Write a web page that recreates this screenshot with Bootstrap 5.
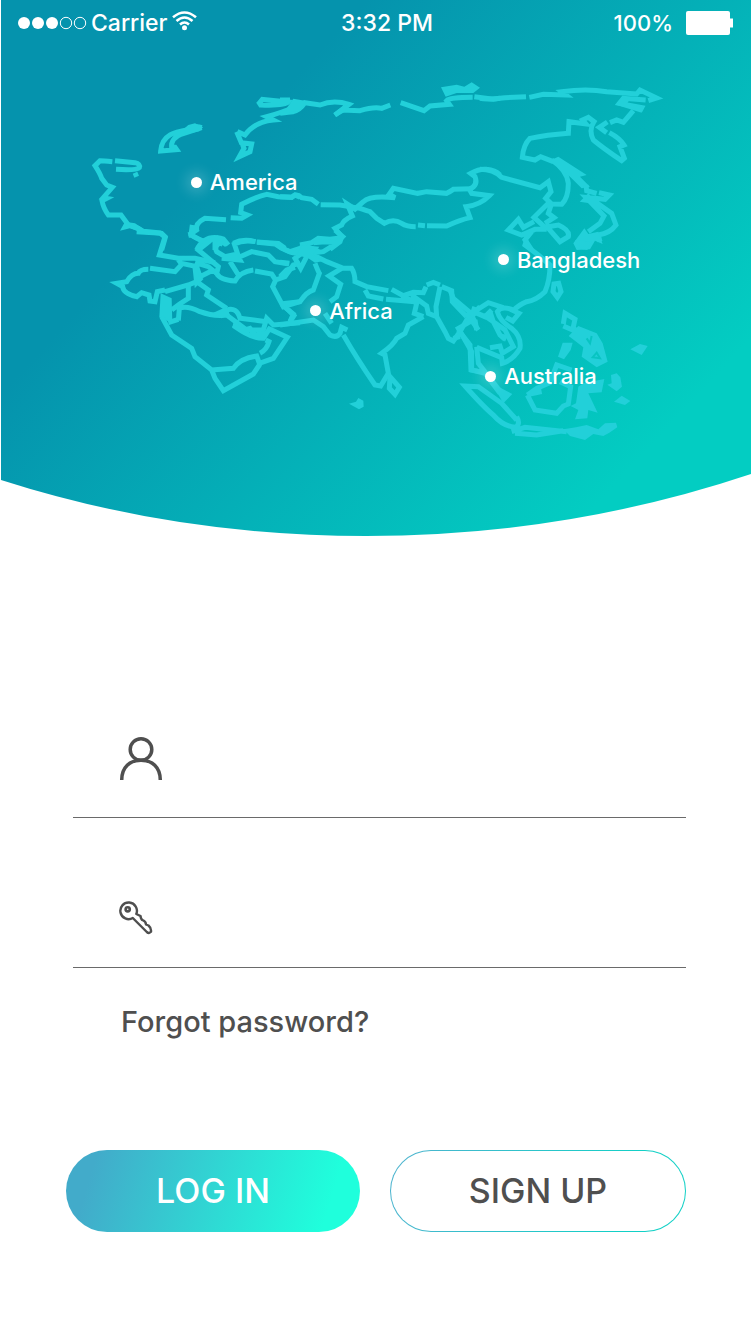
<!DOCTYPE html>
<html lang="en">
<head>
<meta charset="utf-8">
<meta name="viewport" content="width=device-width, initial-scale=1">
<title>Log in</title>
<link href="https://cdn.jsdelivr.net/npm/bootstrap@5.3.0/dist/css/bootstrap.min.css" rel="stylesheet">
<style>
  body { font-family: Inter, "Open Sans", sans-serif; color: #4f4f4f; background: #fff; }
  .hero { padding-left: 1px; }
  .status-bar { padding: 8px 18px 0 17px; font-size: 23px; line-height: 30px; font-weight: 500; }
  .status-side { flex: 1 1 0; }
  .battery-level { font-size: 22px; }
  .pin { font-size: 22px; line-height: 24px; font-weight: 500; gap: 8px; transform: translateY(-50%); }
  .pin-dot { width: 11px; height: 11px; background: #fff; box-shadow: 0 0 14px 5px rgba(255,255,255,.2); }
  .pin-america { left: 25.4%; top: 34%; }
  .pin-bangladesh { left: 66.3%; top: 48.5%; }
  .pin-africa { left: 41.3%; top: 58%; }
  .pin-australia { left: 64.6%; top: 70.2%; }
  .panel { padding: 132px 65px 100px 66px; }
  .field { height: 150px; margin-left: 7px; padding: 0 0 37px 46px; border-bottom: 1px solid #6a6a6a; gap: 24px; }
  .field-password { padding-bottom: 32px; }
  .field label { width: 44px; line-height: 0; }
  .field .form-control { font-size: 28px; line-height: 32px; color: #4f4f4f; }
  .forgot { margin: 34px 0 0 55px; font-size: 29px; line-height: 40px; font-weight: 500; color: #4f4f4f; }
  .actions { gap: 30px; margin-top: 108px; }
  .btn-pill { flex: 1 1 0; height: 82px; border-radius: 41px; font-size: 34px; line-height: 40px; font-weight: 500; }
  .btn-login, .btn-login:hover { color: #fff; border: 0; background: linear-gradient(107deg, #42abca 10%, #1fffdc 88%); }
  .btn-signup, .btn-signup:hover { color: #4f4f4f; border: 1px solid transparent;
    background: linear-gradient(#fff, #fff) padding-box, linear-gradient(107deg, #4fb3cf, #12d0c6 80%) border-box; }
</style>
</head>
<body>
<header class="hero position-relative text-white">
  <svg class="d-block w-100" viewBox="0 0 750 536" aria-hidden="true">
    <defs>
      <linearGradient id="sea" gradientUnits="userSpaceOnUse" x1="196" y1="182" x2="571" y2="531">
        <stop offset="0" stop-color="#0593ad"/><stop offset="1" stop-color="#03cdc2"/>
      </linearGradient>
      <style>.land path { fill: none; stroke: #22d0d9; stroke-width: 15; } .land .isle { fill: #22d0d9; stroke: none; }</style>
    </defs>
    <path fill="url(#sea)" d="M0 0H750V474Q565 536 365 536Q175 536 0 480Z"/>
    <!-- north-west coast -->
    <g class="land" transform="translate(79 70) scale(.33333)">
      <path d="M97 275Q70 272 60 272L45 287Q60 310 65 325L80 345 97 352 70 383 80 385 66 392Q70 415 85 435L123 435 145 465 175 475 190 484 240 489 256 502 245 540"/>
      <path class="isle" d="M120 482L135 455 165 460 195 480 170 482 150 475Z"/>
      <path d="M105 272L165 278Q182 282 178 293Q170 302 108 298M165 308L170 320"/>
      <path d="M365 173Q345 166 330 178C290 185 246 190 242 243L290 239 285 232 275 232Q272 205 305 192L365 173"/>
      <path class="isle" d="M310 178L325 165 345 160 369 172 358 184 320 192Z"/>
      <path d="M538 99L547 88 625 96Q615 108 542 105Z"/>
      <path d="M472 185L495 195Q525 155 580 150L560 140Q600 130 660 105M470 185L484 218 515 222 510 245 478 260 492 235 484 215"/>
      <path d="M438 449L375 445Q345 460 350 480L335 490 337 465 333 495Q360 512 380 515"/>
      <path d="M452 443L485 445 502 435 482 428 485 403Q530 380 560 373L595 380 635 382 645 375 660 382"/>
      <path d="M350 540Q370 500 410 503L440 525M405 540L405 515 428 522M460 520Q490 505 525 515M530 516L595 520 615 535"/>
    </g>
    <!-- arctic coast and steppe -->
    <g class="land" transform="translate(279 70) scale(.33333)">
      <path d="M0 90H30M0 130Q30 125 40 125Q60 120 75 98L120 105Q160 88 207 103L165 135M185 120L240 122Q280 110 305 115L331 105M362 98L432 122 450 108 508 103 500 92Q510 82 578 82M583 80L640 88 660 85"/>
      <path class="isle" d="M22 112L40 86 75 92 76 105 60 122 20 128Z"/>
      <path class="isle" d="M160 130L190 108 213 103 190 128 168 141Z"/>
      <path class="isle" d="M483 52L530 44 553 50 575 37 600 53 580 69 530 69 497 80Z"/>
      <path d="M0 380L35 382Q50 368 65 383L95 388 115 403M122 404L180 405 240 415Q265 423 270 425L290 445 313 460Q340 445 365 460Q380 470 407 470M414 465L435 467M441 467L500 468Q540 450 570 443L558 410Q600 405 628 377L575 370 568 358"/>
      <path d="M575 356L520 358Q510 365 500 370L440 365 413 370 340 355 328 372 345 383Q270 375 250 395L225 417 202 402 217 438Q190 450 185 465L165 475 185 500 180 515 150 538"/>
      <path d="M570 357Q595 345 585 320L572 310Q600 295 620 298Q645 300 660 315M60 525L95 518 115 505 150 508 185 503"/>
    </g>
    <!-- far east -->
    <g class="land" transform="translate(479 70) scale(.33333)">
      <path d="M0 85Q20 90 75 83L138 80M148 82L190 73 258 75 245 65Q320 55 380 65L470 72 480 60 530 84 505 92M497 90L430 85 418 100 485 113 480 122M460 122Q445 140 430 157L410 150 390 158M382 156L358 172 380 188M388 188Q420 205 432 225L420 230 433 265 425 272Q370 235 340 210Q325 180 342 155L325 142 308 150 318 162 267 155 265 190Q200 195 150 205Q130 225 127 262L165 270 182 260 220 275"/>
      <path class="isle" d="M410 105L425 82 450 88 440 102 488 112 485 128Z"/>
      <path d="M0 298Q40 298 65 322L180 353 205 335 213 365 197 385 215 402 245 403Q265 385 265 340Q260 300 215 270"/>
      <path class="isle" d="M213 270L235 260 320 315 300 320 330 350 305 355 270 320 235 295Z"/>
      <path d="M318 345L320 362 350 370M357 368L388 375 375 388 318 382 372 438 360 460 325 485M345 395L395 430 408 465Q390 490 355 495L360 515M330 375L315 390 350 395"/>
      <path class="isle" d="M280 520L313 475 325 492 355 485 368 522 345 512 330 538 290 540Z"/>
      <path d="M205 400L162 442 195 472 235 465Q270 480 265 500L240 515 205 475M215 400L205 430 222 443 195 460M162 455L130 472 115 448 85 480 125 495 165 478 200 478M155 485L135 510 155 540"/>
    </g>
    <!-- mediterranean and arabia -->
    <g class="land" transform="translate(99 230) scale(.33333)">
      <path d="M110 5L185 10 195 20 178 75 235 85 285 85 345 98M232 85L245 103 225 125 150 115M245 100L290 110 300 140 340 120M285 98L325 110 350 130"/>
      <path d="M145 118Q120 118 115 130Q95 130 80 155L50 160 68 170Q70 190 110 200L125 188 147 195 150 213 165 215 172 185 195 180M195 185L265 165 290 155 325 180 320 195 380 235"/>
      <path d="M265 165V205Q240 220 215 240M235 272L238 235Q260 225 300 245Q340 260 380 255L440 300 490 300 500 265 520 285 600 278M380 240Q410 230 420 265L500 275"/>
      <path class="isle" d="M182 190L215 205 217 280 178 262ZM340 248L380 230 390 255 365 265Z"/>
      <path d="M185 260L215 315 275 355 285 380 335 420 400 415Q420 385 470 378L478 400 520 385 562 322 508 297 490 325Q450 325 400 285M335 420L345 445 370 482 460 432 480 402M480 370Q500 360 507 335L497 330M205 278L235 268M410 270L405 290 425 303 450 295 465 315 495 310"/>
      <path d="M270 5L273 15 320 40 295 60 355 110 350 130Q360 150 405 153Q420 125 460 120M320 40Q345 15 370 27L385 45M370 33Q340 45 350 65L375 80 410 72 420 90 365 85M465 123L515 132 527 150 518 170 550 230 600 215M527 150L555 140 580 105 600 100M467 35Q430 28 403 42L415 78M472 37L525 42 545 55 570 65 600 55M410 85L455 65 505 75 525 95 567 102M390 95L415 135M560 235L582 257 570 275M285 112L290 158 305 142"/>
    </g>
    <!-- india -->
    <g class="land" transform="translate(279 230) scale(.33333)">
      <path d="M165 0L188 20 170 38 135 35 100 38M0 50Q30 70 50 70L70 45 105 60 80 80 62 115 45 85 85 55M170 40L130 65 90 70 140 95 190 115 215 115Q225 130 225 155L260 170 325 182M0 97L28 100M0 140L20 120 45 112"/>
      <path class="isle" d="M50 75L65 45 118 50 98 75 130 93 105 98 85 85Z"/>
      <path d="M105 100Q115 125 118 130L100 180Q80 185 60 215L0 222M15 232L40 252 30 275M0 285L100 270 130 290 150 315Q170 325 180 310L185 292 202 300M190 315Q230 385 285 465L302 468 325 430 315 375 305 370Q340 345 350 325L375 310 385 285 430 260"/>
      <path d="M185 115L147 138 182 163 170 200 150 215M135 250L155 280M255 180L265 198 310 207M318 208L405 215M335 178L370 197 400 187 430 188 438 170M365 197L410 220 403 250 430 260M395 195L440 228 445 250 470 260 495 305 505 325 520 333 540 305 560 270 600 230"/>
      <path d="M440 165L460 157 480 165M485 170L515 182 517 215 560 260M480 170L468 230 470 260M560 250L595 300M535 300L570 345 573 420 600 425"/>
      <path d="M330 440L358 472 345 493 328 475Z"/>
      <path class="isle" d="M207 521L228 515 235 504 250 512 251 530 237 538Z"/>
    </g>
    <!-- south-east islands -->
    <g class="land" transform="translate(449 240) scale(.33333)">
      <path d="M230 0L225 15 265 45 300 75Q300 120 285 155Q260 180 230 185Q205 195 190 212L207 220 188 243 168 232M195 212Q155 195 142 215Q150 245 185 265Q215 290 210 325Q190 360 157 370L155 353 80 322"/>
      <path d="M312 132L326 130 333 155 322 172 309 155Z"/>
      <path d="M0 150L10 175 75 230M65 205L80 210 115 188 160 203M78 235L25 265 65 335 65 390 105 400 150 460M75 240L80 270M10 295L30 290M80 320L85 370 155 460M100 225L130 245 150 285 165 298M120 215L130 245 165 270 190 320 157 340 150 318 120 323M70 215L105 230 125 210"/>
      <path class="isle" d="M125 430L187 462 160 490ZM145 280L175 285 165 305Z"/>
      <path d="M200 530Q212 550 198 562Q160 560 130 525Q100 500 45 438L85 440 155 490 200 540M185 575L225 562 350 575M195 580L260 585 340 572"/>
      <path class="isle" d="M340 568L378 562 410 555 445 568 465 550 498 548 502 562 478 578 460 588 430 582 405 600 360 588Z"/>
      <path d="M232 465L255 510 320 520 340 498 355 492 362 440 330 425M232 465L260 445 300 428 320 375 365 390M240 462L275 455"/>
      <path class="isle" d="M362 498L378 490 385 440 400 430 463 417 455 457 415 460 443 518 415 510 412 535 375 538 385 510Z"/>
      <path d="M340 252L345 220 375 238 368 270 340 258M368 262L385 278"/>
      <path class="isle" d="M356 288L385 258 440 280 458 310 473 365 440 382 395 350 400 322Z"/>
      <path class="isle" d="M324 350L338 308 368 308 362 330 342 358ZM541 328L570 312 593 318 575 345ZM472 434L485 430 483 405 500 400 511 412 516 440 500 454ZM492 485L515 467 541 483 525 495Z"/>
      <path style="stroke:#08c4c2;stroke-width:6" d="M410 295L420 310 425 288M428 352L440 338 450 355Z"/>
      <path class="isle" d="M375 0L395 28 412 30 425 5Z"/>
    </g>
  </svg>

  <div class="status-bar position-absolute top-0 start-0 w-100 d-flex align-items-center">
    <div class="status-side d-flex align-items-center">
      <svg width="70" height="14" viewBox="0 0 70 14" aria-hidden="true">
        <g fill="#fff"><circle cx="7" cy="7" r="6"/><circle cx="21" cy="7" r="6"/><circle cx="35" cy="7" r="6"/></g>
        <g fill="none" stroke="#fff"><circle cx="49" cy="7" r="5.7"/><circle cx="63" cy="7" r="5.7"/></g>
      </svg>
      <span class="ms-1 me-1">Carrier</span>
      <svg class="mb-1" width="25" height="20" viewBox="0 0 25 20" aria-hidden="true">
        <g fill="none" stroke="#fff" stroke-width="2.6"><path d="M1 6.300Q12.500-3.300 24 6.300M4.500 10Q12.500 3 20.500 10M8 13.500Q12.500 9.500 17 13.500"/></g>
        <circle cx="12.500" cy="16.700" r="2.500" fill="#fff"/>
      </svg>
    </div>
    <span class="ms-4">3:32 PM</span>
    <div class="status-side d-flex align-items-center justify-content-end gap-2">
      <span class="battery-level">100%</span>
      <svg class="ms-1" width="48" height="24" viewBox="0 0 48 24" aria-hidden="true"><rect x="1" width="44" height="24" rx="2" fill="#fff"/><path fill="#fff" d="M44 7.500h4v9H44z"/></svg>
    </div>
  </div>

  <div class="pin pin-america position-absolute d-flex align-items-center"><span class="pin-dot rounded-circle"></span>America</div>
  <div class="pin pin-bangladesh position-absolute d-flex align-items-center"><span class="pin-dot rounded-circle"></span>Bangladesh</div>
  <div class="pin pin-africa position-absolute d-flex align-items-center"><span class="pin-dot rounded-circle"></span>Africa</div>
  <div class="pin pin-australia position-absolute d-flex align-items-center"><span class="pin-dot rounded-circle"></span>Australia</div>
</header>

<main>
  <form class="panel">
    <div class="field d-flex align-items-end">
      <label for="user">
        <svg role="img" aria-label="Username" width="44" height="44" viewBox="0 0 44 44" fill="none" stroke="#4f4f4f" stroke-width="3.500"><circle cx="22" cy="13.500" r="10.800"/><path d="M2.700 44C2.700 31 11 24.200 22 24.200S41.300 31 41.300 44"/></svg>
      </label>
      <input id="user" type="text" class="form-control border-0 p-0 shadow-none bg-transparent" autocomplete="username">
    </div>
    <div class="field field-password d-flex align-items-end">
      <label for="pass">
        <svg role="img" aria-label="Password" width="34" height="34" viewBox="0 0 34 34" fill="none" stroke="#4f4f4f" stroke-width="2.400" stroke-linejoin="round"><path d="M17.300 13A8.300 8.300 0 1 0 13.800 17L27.800 31Q30 33 32 30.800Q32.500 27 29.500 24.500L27 23.500Q27 20.500 23.500 19Q22 18.500 21.500 15Z"/><circle cx="8.700" cy="8.300" r="2.100" stroke-width="2.600"/></svg>
      </label>
      <input id="pass" type="password" class="form-control border-0 p-0 shadow-none bg-transparent" autocomplete="current-password">
    </div>
    <a href="#" class="forgot d-inline-block text-decoration-none">Forgot password?</a>
    <div class="actions d-flex">
      <button type="submit" class="btn btn-pill btn-login">LOG IN</button>
      <button type="button" class="btn btn-pill btn-signup">SIGN UP</button>
    </div>
  </form>
</main>
<script src="https://cdn.jsdelivr.net/npm/bootstrap@5.3.0/dist/js/bootstrap.bundle.min.js"></script>
</body>
</html>
